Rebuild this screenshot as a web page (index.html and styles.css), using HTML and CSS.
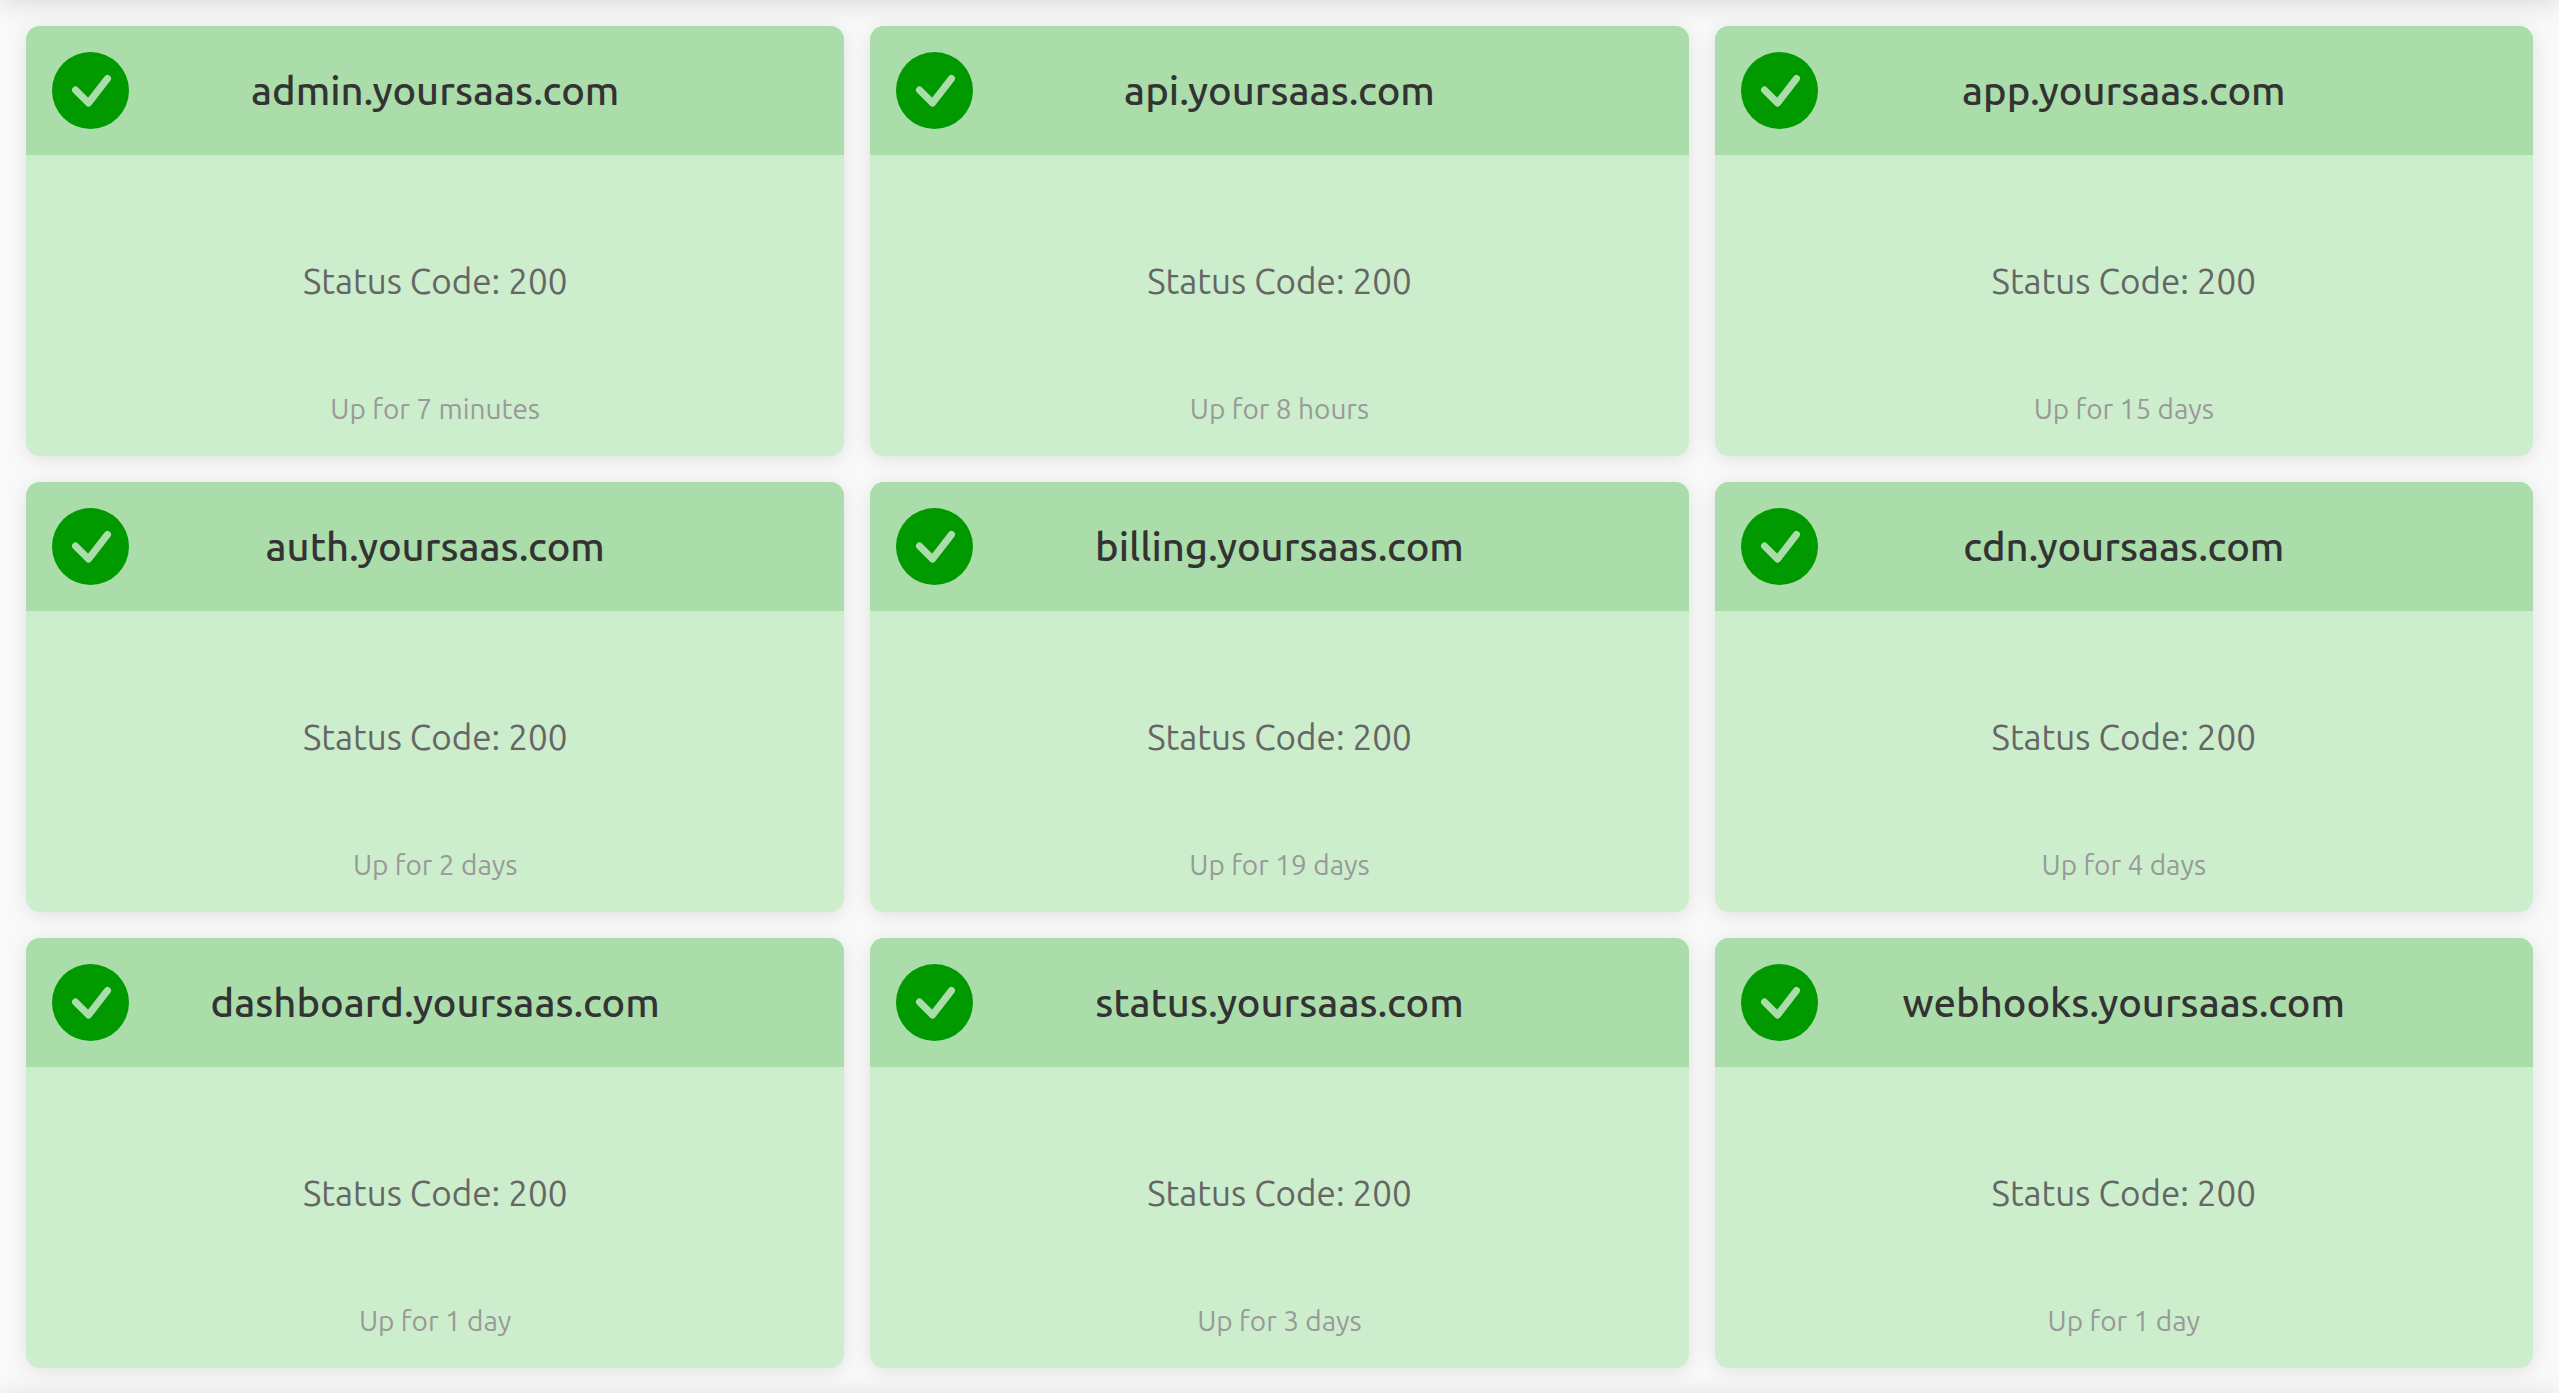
FILE: index.html
```html
<!DOCTYPE html>
<html lang="en">
<head>
<meta charset="UTF-8">
<meta name="viewport" content="width=device-width, initial-scale=1.0">
<title>Status</title>
<link rel="stylesheet" href="styles.css">
</head>
<body>

<svg class="sprite" aria-hidden="true">
  <symbol id="check" viewBox="0 0 77 77">
    <circle cx="38.5" cy="38.5" r="38.5" fill="#009900"/>
    <path d="M23.5 38 L36.5 51 L55.5 26.5" fill="none" stroke="#aaddaa" stroke-width="7" stroke-linecap="round" stroke-linejoin="round"/>
  </symbol>
</svg>

<header class="top-bar"></header>

<main class="services">
  <section class="card">
    <div class="card-header">
      <svg class="icon"><use href="#check"/></svg>
      <h2>admin.yoursaas.com</h2>
    </div>
    <div class="card-body">
      <p class="code">Status Code: 200</p>
      <p class="uptime">Up for 7 minutes</p>
    </div>
  </section>
  <section class="card">
    <div class="card-header">
      <svg class="icon"><use href="#check"/></svg>
      <h2>api.yoursaas.com</h2>
    </div>
    <div class="card-body">
      <p class="code">Status Code: 200</p>
      <p class="uptime">Up for 8 hours</p>
    </div>
  </section>
  <section class="card">
    <div class="card-header">
      <svg class="icon"><use href="#check"/></svg>
      <h2>app.yoursaas.com</h2>
    </div>
    <div class="card-body">
      <p class="code">Status Code: 200</p>
      <p class="uptime">Up for 15 days</p>
    </div>
  </section>
  <section class="card">
    <div class="card-header">
      <svg class="icon"><use href="#check"/></svg>
      <h2>auth.yoursaas.com</h2>
    </div>
    <div class="card-body">
      <p class="code">Status Code: 200</p>
      <p class="uptime">Up for 2 days</p>
    </div>
  </section>
  <section class="card">
    <div class="card-header">
      <svg class="icon"><use href="#check"/></svg>
      <h2>billing.yoursaas.com</h2>
    </div>
    <div class="card-body">
      <p class="code">Status Code: 200</p>
      <p class="uptime">Up for 19 days</p>
    </div>
  </section>
  <section class="card">
    <div class="card-header">
      <svg class="icon"><use href="#check"/></svg>
      <h2>cdn.yoursaas.com</h2>
    </div>
    <div class="card-body">
      <p class="code">Status Code: 200</p>
      <p class="uptime">Up for 4 days</p>
    </div>
  </section>
  <section class="card">
    <div class="card-header">
      <svg class="icon"><use href="#check"/></svg>
      <h2>dashboard.yoursaas.com</h2>
    </div>
    <div class="card-body">
      <p class="code">Status Code: 200</p>
      <p class="uptime">Up for 1 day</p>
    </div>
  </section>
  <section class="card">
    <div class="card-header">
      <svg class="icon"><use href="#check"/></svg>
      <h2>status.yoursaas.com</h2>
    </div>
    <div class="card-body">
      <p class="code">Status Code: 200</p>
      <p class="uptime">Up for 3 days</p>
    </div>
  </section>
  <section class="card">
    <div class="card-header">
      <svg class="icon"><use href="#check"/></svg>
      <h2>webhooks.yoursaas.com</h2>
    </div>
    <div class="card-body">
      <p class="code">Status Code: 200</p>
      <p class="uptime">Up for 1 day</p>
    </div>
  </section>
</main>

<footer class="bottom-bar"></footer>

</body>
</html>
```

FILE: styles.css
```css
* {
  box-sizing: border-box;
}

body {
  margin: 0;
  height: 100vh;
  overflow: hidden;
  background-color: #f9f9f9;
  color: #333;
  font-family: Ubuntu, "Noto Sans", sans-serif;
  text-align: center;
}

h2,
p {
  margin: 0;
}

.sprite {
  display: none;
}

/* the bars sit just outside the window, only their shadows show */
.top-bar,
.bottom-bar {
  height: 80px;
  box-shadow: 0 3px 26px rgba(0, 0, 0, 0.13);
}

.top-bar {
  margin-top: -80px;
}

.services {
  display: grid;
  grid-template-columns: repeat(3, 1fr);
  grid-auto-rows: 1fr;
  gap: 26px;
  padding: 26px;
}

.card {
  display: flex;
  flex-direction: column;
  min-height: 430px;
  overflow: hidden;
  border-radius: 14px;
  background-color: #cceecc;
  box-shadow: 0 3px 20px rgba(0, 0, 0, 0.1);
}

.card-header {
  display: grid;
  grid-template-columns: 77px 1fr 77px;
  align-items: center;
  padding: 26px;
  background-color: #aaddaa;
}

.card-header h2 {
  font-size: 40px;
  font-weight: 500;
  line-height: 48px;
}

.icon {
  display: block;
  width: 77px;
  height: 77px;
}

.card-body {
  flex: 1;
  display: flex;
  flex-direction: column;
  padding: 26px 26px 20px;
}

.code {
  flex: 1;
  display: flex;
  align-items: center;
  justify-content: center;
  color: #666;
  font-size: 35px;
}

.uptime {
  color: #999;
  font-size: 28px;
  line-height: 55px;
}
```
